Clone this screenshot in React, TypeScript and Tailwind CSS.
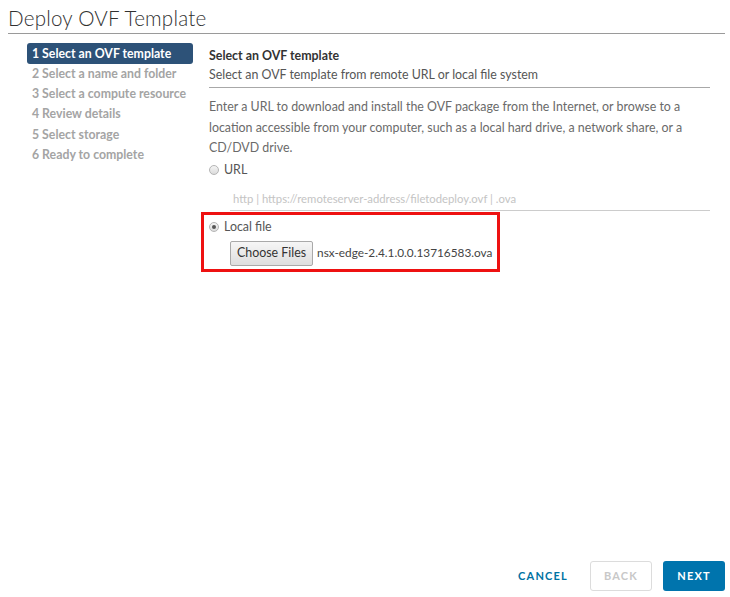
import React from "react";

const steps = [
  "1 Select an OVF template",
  "2 Select a name and folder",
  "3 Select a compute resource",
  "4 Review details",
  "5 Select storage",
  "6 Ready to complete",
];

function Radio({ checked }: { checked?: boolean }) {
  return (
    <span className="inline-flex w-[10px] h-[10px] rounded-full border border-[#b5b5b5] bg-gradient-to-b from-[#f4f4f4] to-[#dcdcdc] items-center justify-center mr-[5px]">
      {checked && <span className="w-[4px] h-[4px] rounded-full bg-[#555]" />}
    </span>
  );
}

export default function App() {
  return (
    <div
      className="w-[730px] h-[597px] bg-white flex flex-col text-[#565656]"
      style={{ fontFamily: "Lato, 'Open Sans', sans-serif" }}
    >
      <div className="px-[8px] pt-[5px]">
        <h1 className="text-[20.6px] font-light text-[#313131] leading-[26px] tracking-[0.2px]">
          Deploy OVF Template
        </h1>
        <div className="mt-[2px] h-px bg-[#9a9a9a] w-[717px]" />
      </div>
      <div className="flex flex-1">
        <div className="w-[201px] pl-[27px] pt-[9px] flex flex-col">
          {steps.map((s, i) => (
            <div
              key={s}
              className={
                i === 0
                  ? "h-[21px] w-[166px] rounded-[3px] bg-[#2d5278] text-white font-bold text-[12.3px] leading-[21px] px-[5px]"
                  : "h-[20.2px] text-[#a4a4a4] font-bold text-[12.3px] leading-[19px] px-[5px]"
              }
            >
              {s}
            </div>
          ))}
        </div>
        <div className="pl-[8px] pt-[12px] w-[510px] text-[12.4px]">
          <div className="font-bold text-[#333] leading-[19px]">Select an OVF template</div>
          <div className="text-[#565656] leading-[19px]">
            Select an OVF template from remote URL or local file system
          </div>
          <div className="mt-[3px] h-px bg-[#a8a8a8] w-[501px]" />
          <p className="mt-[9px] leading-[20.5px] text-[#6a6a6a] w-[505px]">
            Enter a URL to download and install the OVF package from the Internet, or browse to a
            location accessible from your computer, such as a local hard drive, a network share, or a
            CD/DVD drive.
          </p>
          <div className="mt-[2px] flex items-center leading-[18px] text-[#565656]">
            <Radio />
            URL
          </div>
          <div className="ml-[21px] mt-[12px] w-[480px] border-b border-[#cccccc] pb-[3px] pl-[3px] text-[11.3px] text-[#c4c4c4] leading-[16px] whitespace-nowrap">
            http | https://remoteserver-address/filetodeploy.ovf | .ova
          </div>
          <div className="-ml-[8px] mt-[1px] w-[299px] h-[60px] border-[3px] border-[#ee1111] pl-[5px] pt-[3px]">
            <div className="flex items-center leading-[18px] text-[#565656]">
              <Radio checked />
              Local file
            </div>
            <div className="flex items-center mt-[5px] ml-[21px] whitespace-nowrap">
              <button className="shrink-0 h-[25px] px-[6px] border border-[#a9a9a9] rounded-[2px] bg-gradient-to-b from-[#f6f6f6] to-[#dedede] text-[12.4px] text-[#333] whitespace-nowrap">
                Choose Files
              </button>
              <span className="ml-[4px] text-[11.8px] text-[#444] whitespace-nowrap">nsx-edge-2.4.1.0.0.13716583.ova</span>
            </div>
          </div>
        </div>
      </div>
      <div className="flex justify-end items-center gap-[11px] pr-[5px] pb-[6px]">
        <button className="h-[30px] px-[11px] text-[11px] font-bold tracking-[1.2px] text-[#0072a3]">
          CANCEL
        </button>
        <button className="h-[30px] w-[62px] border border-[#dcdcdc] rounded-[3px] text-[11px] font-bold tracking-[1.2px] text-[#c8c8c8]">
          BACK
        </button>
        <button className="h-[30px] w-[62px] rounded-[3px] bg-[#0074ad] text-[11px] font-bold tracking-[1.2px] text-white">
          NEXT
        </button>
      </div>
    </div>
  );
}
